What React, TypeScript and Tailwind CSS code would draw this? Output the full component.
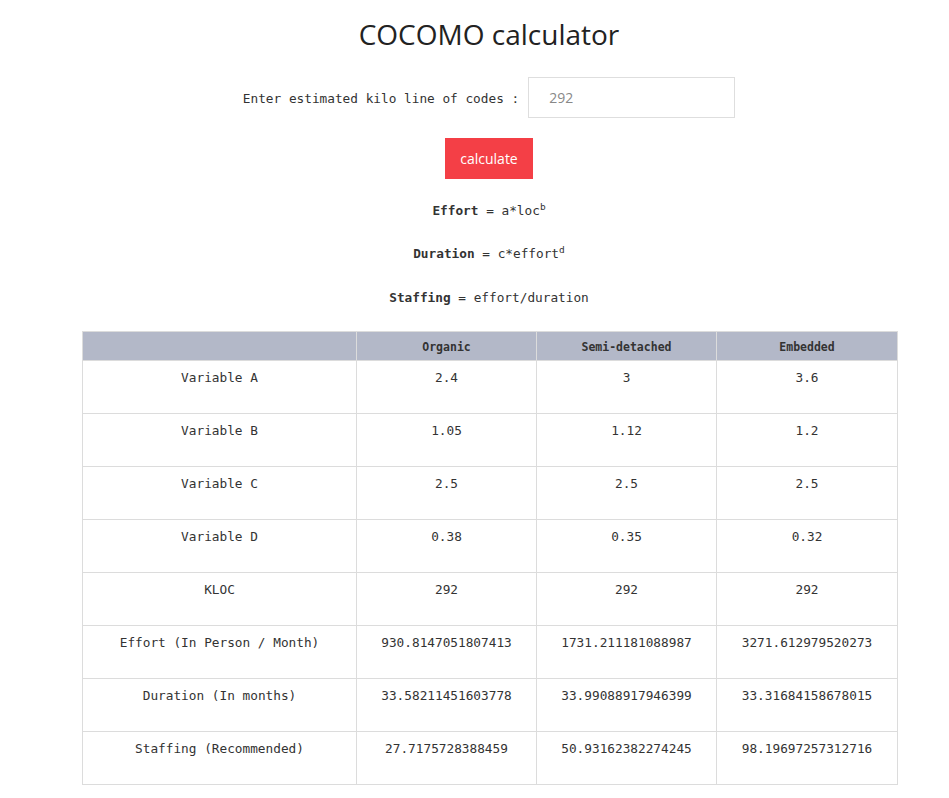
import React from "react";

const mono = { fontFamily: '"DejaVu Sans Mono", "Liberation Mono", monospace' };

const rows: [string, string, string, string][] = [
  ["Variable A", "2.4", "3", "3.6"],
  ["Variable B", "1.05", "1.12", "1.2"],
  ["Variable C", "2.5", "2.5", "2.5"],
  ["Variable D", "0.38", "0.35", "0.32"],
  ["KLOC", "292", "292", "292"],
  ["Effort (In Person / Month)", "930.8147051807413", "1731.211181088987", "3271.612979520273"],
  ["Duration (In months)", "33.58211451603778", "33.99088917946399", "33.31684158678015"],
  ["Staffing (Recommended)", "27.7175728388459", "50.93162382274245", "98.19697257312716"],
];

export default function App() {
  return (
    <div className="min-h-[798px] bg-white pl-[29px] text-[#333]" style={mono}>
      <div className="flex flex-col items-center">
        <h1
          className="mt-[15px] text-[28px] leading-[38px] text-[#222] font-normal"
          style={{ fontFamily: '"Open Sans", "Noto Sans", sans-serif' }}
        >
          COCOMO calculator
        </h1>
        <div className="mt-[24px] flex items-center">
          <label className="text-[12.75px] text-[#333] mr-[9px] pt-[2px]">Enter estimated kilo line of codes :</label>
          <input
            className="h-[41px] w-[207px] border border-[#dedede] pl-[20px] text-[14px] outline-none placeholder:text-[#888]"
            style={{ fontFamily: '"Open Sans", "Noto Sans", sans-serif' }}
            placeholder="292"
          />
        </div>
        <button
          className="mt-[20px] h-[41px] w-[88px] bg-[#f43f46] text-white text-[14px]"
          style={{ fontFamily: '"Open Sans", "Noto Sans", sans-serif' }}
        >
          calculate
        </button>
        <p className="mt-[22px] text-[12.75px] leading-[20px]">
          <b>Effort</b> = a*loc<sup className="text-[9.5px]">b</sup>
        </p>
        <p className="mt-[23px] text-[12.75px] leading-[20px]">
          <b>Duration</b> = c*effort<sup className="text-[9.5px]">d</sup>
        </p>
        <p className="mt-[24px] text-[12.75px] leading-[20px]">
          <b>Staffing</b> = effort/duration
        </p>
        <div className="mt-[23px] pl-[2px]">
          <table className="w-[815px] table-fixed border-collapse text-[12.75px]">
            <colgroup>
              <col className="w-[274px]" />
              <col className="w-[180px]" />
              <col className="w-[180px]" />
              <col className="w-[181px]" />
            </colgroup>
            <thead>
              <tr className="h-[29px] bg-[#b3b8c8]">
                <th className="border border-[#dcdcdc] font-bold text-[11.5px] pt-[4px]"></th>
                <th className="border border-[#dcdcdc] font-bold text-[11.5px] text-[#333] pt-[4px]">Organic</th>
                <th className="border border-[#dcdcdc] font-bold text-[11.5px] text-[#333] pt-[4px]">Semi-detached</th>
                <th className="border border-[#dcdcdc] font-bold text-[11.5px] text-[#333] pt-[4px]">Embedded</th>
              </tr>
            </thead>
            <tbody>
              {rows.map((r) => (
                <tr key={r[0]} className="h-[53px]">
                  {r.map((c, i) => (
                    <td key={i} className="border border-[#dcdcdc] text-center align-top pt-[7px] leading-[20px]">
                      {c}
                    </td>
                  ))}
                </tr>
              ))}
            </tbody>
          </table>
        </div>
      </div>
    </div>
  );
}
